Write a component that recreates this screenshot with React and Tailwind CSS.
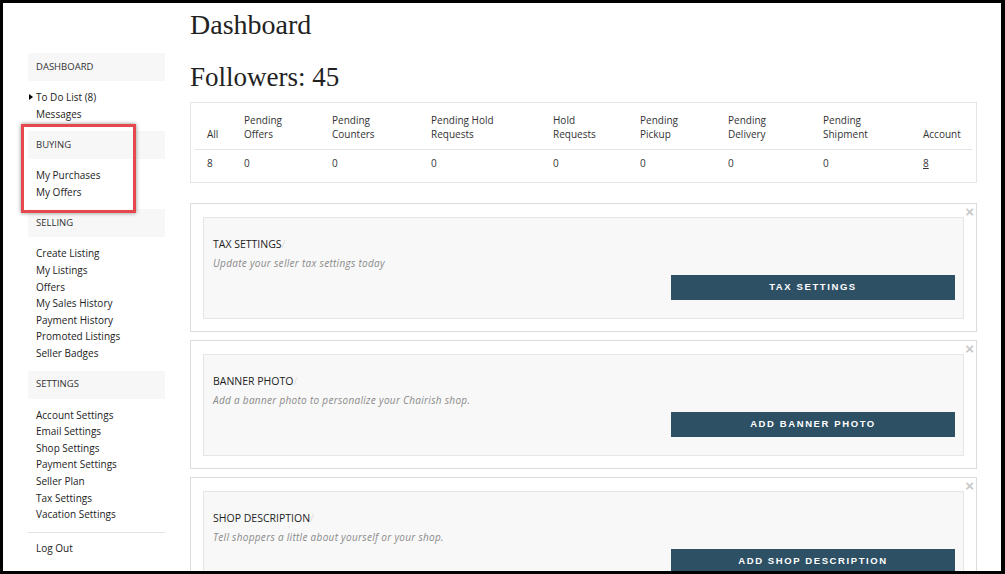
import React from "react";

const sans = { fontFamily: '"Open Sans", "Noto Sans", sans-serif' };

function Section({ title, items, first }) {
  return (
    <div className="mb-[9px]">
      <div className="h-[28px] bg-[#f7f7f7] pl-2 flex items-center text-[9.5px] text-[#333] uppercase">
        {title}
      </div>
      <ul className="pt-[8px]">
        {items.map((it, i) => (
          <li key={it} className="relative pl-2 leading-[16.6px] h-[16.6px] text-[10px] text-[#222]">
            {first && i === 0 && (
              <span className="absolute left-[1px] top-[5px] w-0 h-0 border-l-[4px] border-l-black border-y-[3.5px] border-y-transparent" />
            )}
            {it}
          </li>
        ))}
      </ul>
    </div>
  );
}

const cols = [
  { w: 37, h: ["", "All"], v: "8" },
  { w: 88, h: ["Pending", "Offers"], v: "0" },
  { w: 99, h: ["Pending", "Counters"], v: "0" },
  { w: 122, h: ["Pending Hold", "Requests"], v: "0" },
  { w: 87, h: ["Hold", "Requests"], v: "0" },
  { w: 88, h: ["Pending", "Pickup"], v: "0" },
  { w: 95, h: ["Pending", "Delivery"], v: "0" },
  { w: 100, h: ["Pending", "Shipment"], v: "0" },
  { w: 59, h: ["", "Account"], v: "8", link: true },
];

function Card({ title, sub, btn }) {
  return (
    <div className="relative border border-[#dcdcdc] px-[12px] pt-[13px] pb-[12px] mb-[8px] bg-white">
      <span className="absolute right-[2px] top-[-2px] text-[#c8c8c8] text-[15px] font-bold leading-[20px]" style={{ fontFamily: '"Liberation Sans", sans-serif' }}>
        ×
      </span>
      <div className="h-[102px] border border-[#e6e6e6] bg-[#f8f8f8] pl-[9px] pr-[8px] pt-[19px] flex flex-col">
        <div className="text-[10.5px] leading-[14px] text-[#222] uppercase">
          {title}
          <span className="text-[#dedede]">/</span>
        </div>
        <div className="mt-[5px] text-[10px] leading-[14px] italic text-[#8a8a8a] tracking-[0.3px]">{sub}</div>
        <div className="flex justify-end mt-[5px]">
          <div
            className="w-[284px] h-[25px] bg-[#2e5065] text-white font-bold text-[9.5px] tracking-[1.6px] flex items-center justify-center uppercase"
            style={{ fontFamily: '"Liberation Sans", Arial, sans-serif' }}
          >
            {btn}
          </div>
        </div>
      </div>
    </div>
  );
}

export default function App() {
  return (
    <div
      className="relative w-[1005px] h-[574px] box-border border-t-[3px] border-l-[3px] border-r-[4px] border-b-[3px] border-black bg-white overflow-hidden"
      style={sans}
    >
      <div className="flex h-full">
        {/* Sidebar */}
        <aside className="w-[137px] ml-[25px] mt-[50px] shrink-0">
          <Section title="Dashboard" items={["To Do List (8)", "Messages"]} first />
          <Section title="Buying" items={["My Purchases", "My Offers"]} />
          <Section title="Selling" items={["Create Listing", "My Listings", "Offers", "My Sales History", "Payment History", "Promoted Listings", "Seller Badges"]} />
          <Section title="Settings" items={["Account Settings", "Email Settings", "Shop Settings", "Payment Settings", "Seller Plan", "Tax Settings", "Vacation Settings"]} />
          <div className="border-t border-[#e4e4e4] mt-[1px] pt-[7px] pl-2 text-[10px] leading-[16.6px] text-[#222]">Log Out</div>
        </aside>

        {/* Main */}
        <main className="ml-[25px] w-[787px] shrink-0 pt-[2px]">
          <h1 className="text-[28px] leading-[40px] text-[#222]" style={{ fontFamily: '"Liberation Serif", serif' }}>
            Dashboard
          </h1>
          <h2 className="mt-[12px] text-[27px] leading-[40px] text-[#222]" style={{ fontFamily: '"Liberation Serif", serif' }}>
            Followers: 45
          </h2>
          <div className="mt-[5px] border border-[#e4e4e4] px-[4px] pt-[10px] pb-[12px] text-[10px] leading-[14px] text-[#333]">
            <div className="flex pb-[8px] border-b border-[#e4e4e4]">
              {cols.map((c, i) => (
                <div key={i} className="pl-[12px]" style={{ width: c.w }}>
                  <div className="h-[14px]">{c.h[0]}</div>
                  <div>{c.h[1]}</div>
                </div>
              ))}
            </div>
            <div className="flex pt-[6px]">
              {cols.map((c, i) => (
                <div key={i} className="pl-[12px]" style={{ width: c.w }}>
                  <span className={c.link ? "underline" : ""}>{c.v}</span>
                </div>
              ))}
            </div>
          </div>

          <div className="mt-[20px]">
            <Card title="Tax Settings" sub="Update your seller tax settings today" btn="Tax Settings" />
            <Card title="Banner Photo" sub="Add a banner photo to personalize your Chairish shop." btn="Add Banner Photo" />
            <Card title="Shop Description" sub="Tell shoppers a little about yourself or your shop." btn="Add Shop Description" />
          </div>
        </main>
      </div>

      {/* annotation highlight */}
      <div className="absolute left-[18px] top-[121px] w-[115px] h-[89px] border-[3px] border-[#e5484d] shadow-[0_0_4px_rgba(0,0,0,0.45)]" />
    </div>
  );
}
